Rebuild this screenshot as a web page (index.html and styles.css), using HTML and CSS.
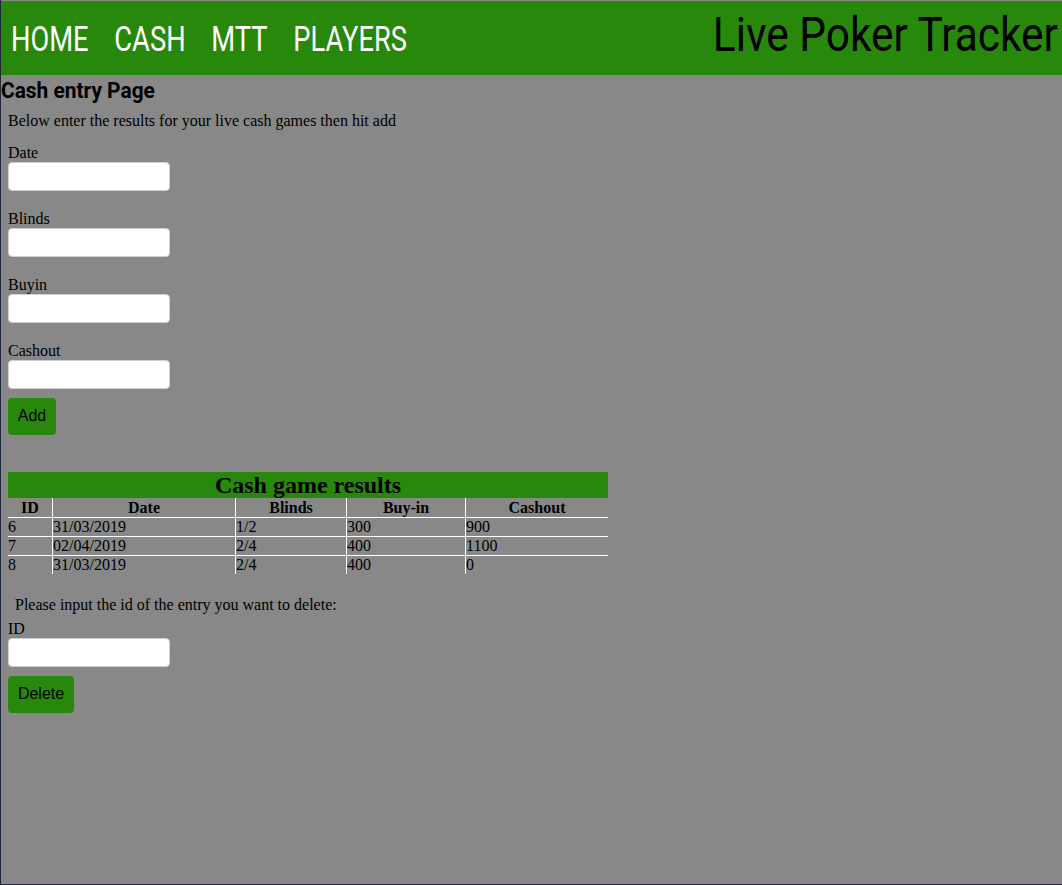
FILE: index.html
```html
<!DOCTYPE html>
<html>
<head>
<meta charset="utf-8">
<title>Live Poker Tracker</title>
<link rel="stylesheet" href="styles.css">
</head>
<body>
<div class="page">
  <header class="topbar">
    <nav class="nav">
      <a class="nav-link" href="#">HOME</a>
      <a class="nav-link" href="#">CASH</a>
      <a class="nav-link" href="#">MTT</a>
      <a class="nav-link" href="#">PLAYERS</a>
    </nav>
    <div class="brand"><span class="brand-text">Live Poker Tracker</span></div>
  </header>

  <h3 class="page-title"><span class="title-text">Cash entry Page</span></h3>
  <p class="intro">Below enter the results for your live cash games then hit add</p>

  <form class="entry-form">
    <div class="field">
      <label class="field-label">Date</label>
      <input class="field-input" type="text">
    </div>
    <div class="field">
      <label class="field-label">Blinds</label>
      <input class="field-input" type="text">
    </div>
    <div class="field">
      <label class="field-label">Buyin</label>
      <input class="field-input" type="text">
    </div>
    <div class="field">
      <label class="field-label">Cashout</label>
      <input class="field-input" type="text">
    </div>
    <button class="btn btn-add" type="button">Add</button>
  </form>

  <table class="results">
    <caption class="results-caption">Cash game results</caption>
    <thead>
      <tr>
        <th class="c-id">ID</th>
        <th class="c-date">Date</th>
        <th class="c-blinds">Blinds</th>
        <th class="c-buyin">Buy-in</th>
        <th class="c-cash">Cashout</th>
      </tr>
    </thead>
    <tbody>
      <tr><td>6</td><td>31/03/2019</td><td>1/2</td><td>300</td><td>900</td></tr>
      <tr><td>7</td><td>02/04/2019</td><td>2/4</td><td>400</td><td>1100</td></tr>
      <tr><td>8</td><td>31/03/2019</td><td>2/4</td><td>400</td><td>0</td></tr>
    </tbody>
  </table>

  <p class="delete-intro">Please input the id of the entry you want to delete:</p>
  <form class="delete-form">
    <label class="field-label">ID</label>
    <input class="field-input" type="text">
    <button class="btn btn-delete" type="button">Delete</button>
  </form>
</div>
</body>
</html>
```

FILE: styles.css
```css
html, body {
  margin: 0;
  padding: 0;
  background: #888888;
}

.page {
  box-sizing: border-box;
  width: 1062px;
  height: 885px;
  padding-top: 1px;
  background: #888888;
  border-left: 1px solid #1e2a3c;
  border-bottom: 1px solid #1e2a3c;
  font-family: "Liberation Serif", "Times New Roman", serif;
  font-size: 16px;
  color: #000;
  overflow: hidden;
}

.topbar {
  height: 74px;
  background: #28880b;
  display: flex;
  justify-content: space-between;
  align-items: flex-start;
}

.nav {
  display: flex;
  gap: 33px;
  padding-left: 10px;
  padding-top: 19px;
  transform: scaleX(0.78);
  transform-origin: 10px center;
  white-space: nowrap;
}

.nav-link {
  font-family: Roboto, "Noto Sans", sans-serif;
  font-size: 35px;
  line-height: 40px;
  color: #ffffff;
  text-decoration: none;
}

.brand {
  font-family: Roboto, "Noto Sans", sans-serif;
  font-size: 49px;
  line-height: 56px;
  color: #000;
  padding-top: 6px;
  padding-right: 4px;
  white-space: nowrap;
}

.brand-text {
  display: inline-block;
  transform: scaleX(0.865);
  transform-origin: right center;
}

.page-title {
  margin: 0;
  padding-left: 0;
  font-family: Roboto, "Noto Sans", sans-serif;
  font-size: 22px;
  font-weight: bold;
  line-height: 32px;
  white-space: nowrap;
}

.title-text {
  display: inline-block;
  transform: scaleX(0.95);
  transform-origin: left center;
}

.intro {
  margin: 4px 0 0 7px;
  line-height: 19px;
}

.entry-form {
  margin-left: 7px;
  display: flex;
  flex-direction: column;
  align-items: flex-start;
  padding-top: 13px;
}

.field {
  display: flex;
  flex-direction: column;
  align-items: flex-start;
}

.field + .field {
  margin-top: 18px;
}

.field-label {
  line-height: 19px;
}

.field-input {
  box-sizing: border-box;
  width: 162px;
  height: 29px;
  margin: 0;
  border: 1px solid #cfcfcf;
  border-radius: 4px;
  background: #ffffff;
}

.btn {
  font-family: "Liberation Sans", Arial, sans-serif;
  font-size: 16px;
  line-height: 18px;
  color: #000;
  background: #28880b;
  border: none;
  border-radius: 4px;
  padding: 9px 0 10px;
  margin: 0;
}

.btn-add {
  margin-top: 9px;
  width: 48px;
}

.results {
  margin: 37px 0 0 7px;
  width: 600px;
  border-collapse: collapse;
  border-spacing: 0;
}

.results-caption {
  background: #28880b;
  font-weight: bold;
  font-size: 24px;
  line-height: 26px;
  height: 26px;
  text-align: center;
}

.results th,
.results td {
  padding: 0;
  line-height: 18px;
  border-left: 1px solid #ffffff;
  text-align: left;
}

.results th {
  font-weight: bold;
  font-size: 16px;
  line-height: 19px;
  text-align: center;
}

.results th:first-child,
.results td:first-child {
  border-left: none;
}

.results tbody tr td {
  border-top: 1px solid #ffffff;
}

.c-id { width: 44px; }
.c-date { width: 182px; }
.c-blinds { width: 110px; }
.c-buyin { width: 118px; }
.c-cash { width: 142px; }

.delete-intro {
  margin: 21px 0 0 14px;
  line-height: 19px;
}

.delete-form {
  margin: 5px 0 0 7px;
  display: flex;
  flex-direction: column;
  align-items: flex-start;
}

.btn-delete {
  margin-top: 9px;
  width: 66px;
}
```
